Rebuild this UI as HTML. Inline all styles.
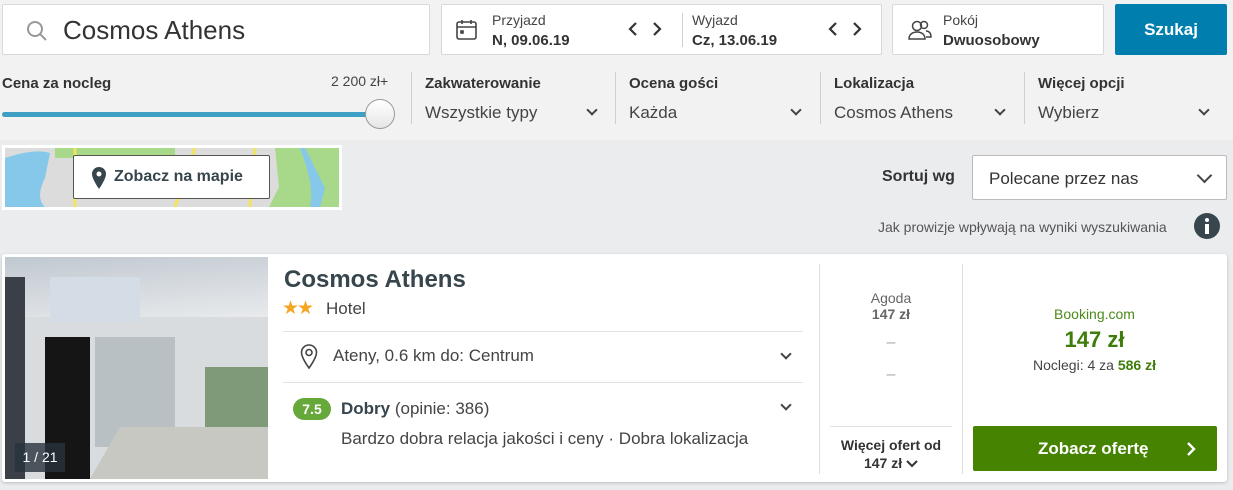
<!DOCTYPE html><html><head><meta charset="utf-8"><style>
*{box-sizing:border-box;margin:0;padding:0}
body{width:1233px;height:490px;overflow:hidden;background:#ebecee;font-family:"Liberation Sans",sans-serif;color:#37454d;position:relative}
.a{position:absolute}
.top{position:absolute;left:0;top:0;width:1233px;height:140px;background:#f2f2f2}
.box{position:absolute;background:#fff;border:1px solid #d8d8d8;border-radius:2px}
.lbl{font-size:14px;color:#444}
.b{font-weight:bold}
.sep{position:absolute;width:1px;background:#cfcfcf}
.fh{font-size:15px;font-weight:bold;color:#333}
.fv{font-size:17px;color:#444}
.chev{position:absolute;width:8px;height:8px;border-right:2px solid #444;border-bottom:2px solid #444;transform:rotate(45deg)}
</style></head><body>
<div class="top"></div>
<div class="box" style="left:2px;top:4px;width:428px;height:51px">
<svg class="a" style="left:22px;top:14px" width="24" height="24" viewBox="0 0 24 24" fill="none" stroke="#999" stroke-width="2"><circle cx="10" cy="10" r="7"/><path d="M15 15l6 6"/></svg>
<div class="a" style="left:60px;top:10px;font-size:26px;color:#333">Cosmos Athens</div></div>
<div class="box" style="left:441px;top:4px;width:441px;height:51px">
<svg class="a" style="left:13px;top:14px" width="24" height="22" viewBox="0 0 24 22" fill="none" stroke="#444" stroke-width="1.6"><rect x="2" y="3" width="19" height="17" rx="2"/><path d="M2 8h19M7 1v4M16 1v4"/><rect x="6" y="12" width="2" height="2" fill="#444"/></svg>
<div class="a lbl" style="left:50px;top:7px">Przyjazd</div>
<div class="a b" style="left:50px;top:27px;font-size:15px;color:#333">N, 09.06.19</div>
<svg class="a" style="left:186px;top:16px" width="34" height="16" viewBox="0 0 34 16" fill="none" stroke="#333" stroke-width="2.2"><path d="M8 2l-6 6 6 6M26 2l6 6-6 6"/></svg>
<div class="sep" style="left:240px;top:8px;height:34px"></div>
<div class="a lbl" style="left:250px;top:7px">Wyjazd</div>
<div class="a b" style="left:250px;top:27px;font-size:15px;color:#333">Cz, 13.06.19</div>
<svg class="a" style="left:386px;top:16px" width="34" height="16" viewBox="0 0 34 16" fill="none" stroke="#333" stroke-width="2.2"><path d="M8 2l-6 6 6 6M26 2l6 6-6 6"/></svg></div>
<div class="box" style="left:892px;top:4px;width:212px;height:51px">
<svg class="a" style="left:14px;top:14px" width="26" height="22" viewBox="0 0 26 22" fill="none" stroke="#444" stroke-width="1.5"><circle cx="10" cy="7" r="4.5"/><path d="M2 20c0-5 4-7 8-7s8 2 8 7z"/><circle cx="17" cy="6" r="3.5"/><path d="M19 12c3 0 5 2 5 6h-5"/></svg>
<div class="a lbl" style="left:50px;top:7px">Pokój</div>
<div class="a b" style="left:50px;top:27px;font-size:15px;color:#333">Dwuosobowy</div></div>
<div class="a" style="left:1115px;top:4px;width:112px;height:51px;background:#007faf;border-radius:2px;color:#fff;font-size:17px;font-weight:bold;text-align:center;line-height:51px">Szukaj</div>
<div class="a fh" style="left:2px;top:75px">Cena za nocleg</div>
<div class="a" style="left:331px;top:73px;font-size:14px;color:#444">2 200 zł+</div>
<div class="a" style="left:2px;top:112px;width:375px;height:5px;background:#3e9fc5;border-radius:3px"></div>
<div class="a" style="left:365px;top:99px;width:30px;height:30px;border-radius:50%;background:linear-gradient(#fff,#e6e6e6);border:1px solid #999"></div>
<div class="sep" style="left:411px;top:72px;height:52px"></div>
<div class="a fh" style="left:425px;top:75px">Zakwaterowanie</div><div class="a fv" style="left:425px;top:103px">Wszystkie typy</div><div class="chev" style="left:588px;top:106px"></div>
<div class="sep" style="left:615px;top:72px;height:52px"></div>
<div class="a fh" style="left:629px;top:75px">Ocena gości</div><div class="a fv" style="left:629px;top:103px">Każda</div><div class="chev" style="left:792px;top:106px"></div>
<div class="sep" style="left:820px;top:72px;height:52px"></div>
<div class="a fh" style="left:834px;top:75px">Lokalizacja</div><div class="a fv" style="left:834px;top:103px">Cosmos Athens</div><div class="chev" style="left:996px;top:106px"></div>
<div class="sep" style="left:1024px;top:72px;height:52px"></div>
<div class="a fh" style="left:1038px;top:75px">Więcej opcji</div><div class="a fv" style="left:1038px;top:103px">Wybierz</div><div class="chev" style="left:1200px;top:106px"></div>
<div class="a" style="left:2px;top:145px;width:340px;height:65px;background:#fff;padding:3px">
<svg width="334" height="59" viewBox="0 0 334 59"><rect width="334" height="59" fill="#dcdcdc"/><path d="M0 10 Q30 0 45 5 L40 30 Q30 50 40 59 H0z" fill="#86c8ea"/><path d="M50 0h120v10H50z" fill="#a8d88a"/><path d="M270 0h64v59h-70l10-20z" fill="#a8d88a"/><path d="M300 0q10 20 20 40l-5 19h-10q5-20-10-59z" fill="#86c8ea"/><path d="M70 0v59M190 0l-20 59M250 0l-5 59" stroke="#f3e45a" stroke-width="3" fill="none"/></svg></div>
<div class="a" style="left:73px;top:155px;width:197px;height:44px;background:#fff;border:1px solid #555;border-radius:2px">
<svg class="a" style="left:17px;top:10px" width="16" height="24" viewBox="0 0 16 24"><path d="M8 1a7 7 0 0 0-7 7c0 5 7 15 7 15s7-10 7-15a7 7 0 0 0-7-7z" fill="#37454d"/><circle cx="8" cy="8" r="2.5" fill="#fff"/></svg>
<div class="a b" style="left:40px;top:12px;font-size:16px;color:#37454d">Zobacz na mapie</div></div>
<div class="a b" style="left:882px;top:168px;font-size:16px;color:#333">Sortuj wg</div>
<div class="box" style="left:972px;top:155px;width:255px;height:45px;border-color:#bbb"><div class="a" style="left:16px;top:13px;font-size:17px;color:#333">Polecane przez nas</div><div class="chev" style="left:226px;top:14px;width:11px;height:11px"></div></div>
<div class="a" style="left:878px;top:219px;font-size:14px;color:#555">Jak prowizje wpływają na wyniki wyszukiwania</div>
<div class="a" style="left:1194px;top:213px;width:26px;height:26px;border-radius:50%;background:#37454d"><div class="a" style="left:11px;top:5px;width:4px;height:4px;background:#fff;border-radius:50%"></div><div class="a" style="left:11px;top:11px;width:4px;height:10px;background:#fff"></div></div>
<div class="a" style="left:2px;top:254px;width:1225px;height:228px;background:#fff;border-radius:3px;box-shadow:0 1px 3px rgba(0,0,0,.2)">
<div class="a" style="left:3px;top:3px;width:263px;height:222px;overflow:hidden;background:#d8dcdf">
<div class="a" style="left:0;top:0;width:263px;height:60px;background:linear-gradient(175deg,#c0c8d0,#e8eaec)"></div>
<div class="a" style="left:200px;top:110px;width:63px;height:70px;background:#7e9a78"></div>
<div class="a" style="left:0;top:20px;width:20px;height:202px;background:#3b4048"></div>
<div class="a" style="left:45px;top:20px;width:90px;height:45px;background:#d4dde6"></div>
<div class="a" style="left:40px;top:80px;width:45px;height:142px;background:#151515"></div>
<div class="a" style="left:90px;top:80px;width:80px;height:110px;background:#b8c0c4"></div>
<div class="a" style="left:100px;top:170px;width:180px;height:52px;background:#c8c8c2;transform:skewX(-30deg)"></div>
<div class="a" style="left:10px;top:186px;width:50px;height:29px;background:rgba(40,50,60,.8);color:#fff;font-size:14px;text-align:center;line-height:29px">1 / 21</div></div>
<div class="a b" style="left:282px;top:12px;font-size:24px;color:#37454d">Cosmos Athens</div>
<div class="a" style="left:280px;top:43px;font-size:19px;color:#f5a623;letter-spacing:-2px">★★</div>
<div class="a" style="left:324px;top:45px;font-size:17px;color:#444">Hotel</div>
<div class="a" style="left:281px;top:77px;width:520px;height:1px;background:#e2e2e2"></div>
<svg class="a" style="left:298px;top:90px" width="18" height="26" viewBox="0 0 18 26" fill="none" stroke="#444" stroke-width="1.6"><path d="M9 1a7.5 7.5 0 0 0-7.5 7.5C1.5 14 9 24 9 24s7.5-10 7.5-15.5A7.5 7.5 0 0 0 9 1z"/><circle cx="9" cy="8.5" r="3"/></svg>
<div class="a" style="left:331px;top:92px;font-size:17px;color:#444">Ateny, 0.6 km do: Centrum</div><div class="chev" style="left:780px;top:96px"></div>
<div class="a" style="left:281px;top:128px;width:520px;height:1px;background:#e2e2e2"></div>
<div class="a b" style="left:291px;top:144px;width:38px;height:22px;border-radius:11px;background:#67a83b;color:#fff;font-size:14px;text-align:center;line-height:22px">7.5</div>
<div class="a" style="left:339px;top:145px;font-size:17px;color:#444"><b style="color:#37454d">Dobry</b> (opinie: 386)</div><div class="chev" style="left:780px;top:147px"></div>
<div class="a" style="left:339px;top:175px;font-size:17px;color:#444">Bardzo dobra relacja jakości i ceny · Dobra lokalizacja</div>
<div class="sep" style="left:817px;top:10px;height:210px;background:#ddd"></div>
<div class="a" style="left:828px;top:36px;width:122px;text-align:center;font-size:14px;color:#666">Agoda<br><b>147 zł</b></div>
<div class="a" style="left:828px;top:80px;width:122px;text-align:center;color:#aaa">–</div>
<div class="a" style="left:828px;top:112px;width:122px;text-align:center;color:#aaa">–</div>
<div class="a" style="left:828px;top:172px;width:122px;height:1px;background:#e2e2e2"></div>
<div class="a b" style="left:828px;top:182px;width:122px;text-align:center;font-size:14px;color:#333;line-height:18px">Więcej ofert od<br>147 zł <svg width="12" height="8" viewBox="0 0 12 8" fill="none" stroke="#333" stroke-width="2"><path d="M1 1l5 5 5-5"/></svg></div>
<div class="sep" style="left:960px;top:10px;height:210px;background:#ddd"></div>
<div class="a" style="left:970px;top:52px;width:245px;text-align:center;font-size:14px;color:#4b8a1a">Booking.com</div>
<div class="a b" style="left:970px;top:73px;width:245px;text-align:center;font-size:22px;color:#3f7d0a">147 zł</div>
<div class="a" style="left:970px;top:103px;width:245px;text-align:center;font-size:14px;color:#444">Noclegi: 4 za <b style="color:#3f7d0a">586 zł</b></div>
<div class="a b" style="left:971px;top:172px;width:244px;height:45px;background:#458300;border-radius:2px;color:#fff;font-size:17px;line-height:45px;padding-left:65px">Zobacz ofertę<svg class="a" style="left:213px;top:15px" width="10" height="16" viewBox="0 0 10 16" fill="none" stroke="#fff" stroke-width="2.4"><path d="M2 2l6 6-6 6"/></svg></div>
</div>
</body></html>
